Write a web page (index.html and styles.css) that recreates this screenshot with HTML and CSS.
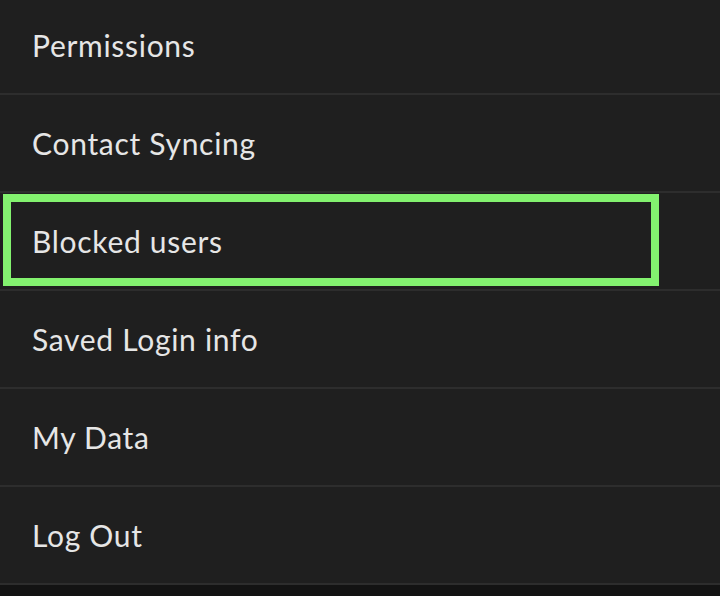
FILE: index.html
```html
<!DOCTYPE html>
<html lang="en">

<head>
    <meta charset="UTF-8">
    <meta name="viewport" content="width=device-width, initial-scale=1.0">
    <title>Settings</title>
    <link rel="stylesheet" href="styles.css">
</head>

<body>
    <div id="container">
        <ul class="menu">
            <li class="menu_item">Permissions</li>
            <li class="menu_item">Contact Syncing</li>
            <li class="menu_item menu_item_marked">Blocked users</li>
            <li class="menu_item">Saved Login info</li>
            <li class="menu_item">My Data</li>
            <li class="menu_item">Log Out</li>
        </ul>
        <div class="menu_rest"></div>
    </div>
</body>

</html>
```

FILE: styles.css
```css
* {
    margin: 0;
    padding: 0;
    box-sizing: border-box;
}

ul,
li {
    list-style: none;
}

html,
body {
    height: 100%;
    background-color: #131313;
}

#container {
    height: 100%;
    overflow: hidden;
    display: flex;
    flex-direction: column;
    font-family: Lato, "Noto Sans", sans-serif;
    color: #e6e6e6;
}

.menu {
    margin-top: -5px;
    background-color: #1f1f1f;
    border-bottom: 2px solid #2d2d2d;
}

.menu_item {
    position: relative;
    height: 98px;
    border-top: 2px solid #2d2d2d;
    padding: 31px 0 0 32px;
    font-size: 30px;
    line-height: 35px;
    letter-spacing: 0.7px;
}

.menu_item:first-child {
    border-top-color: #1f1f1f;
}

.menu_item_marked::after {
    content: "";
    box-sizing: border-box;
    position: absolute;
    left: 3px;
    top: 1px;
    width: 656px;
    height: 92px;
    border: 8px solid #83f26f;
}

.menu_rest {
    flex: 1;
}
```
